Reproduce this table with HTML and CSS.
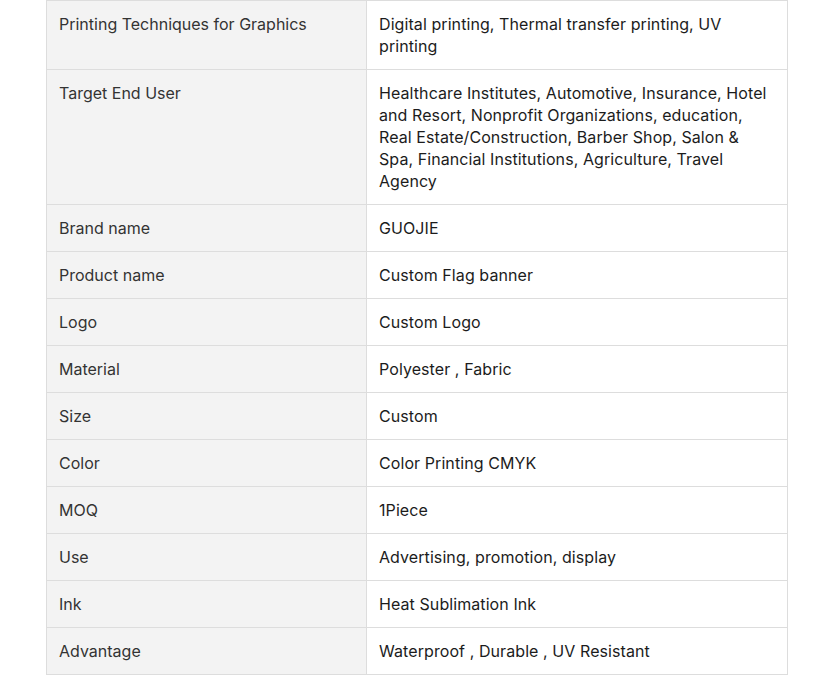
FILE: index.html
```html
<!DOCTYPE html>
<html>
<head>
<meta charset="utf-8">
<link rel="stylesheet" href="styles.css">
</head>
<body>
<table class="spec">
<colgroup><col class="c1"><col class="c2"></colgroup>
<tbody>
<tr><td class="k">Printing Techniques for Graphics</td><td class="v">Digital printing, Thermal transfer printing, UV printing</td></tr>
<tr><td class="k">Target End User</td><td class="v">Healthcare Institutes, Automotive, Insurance, Hotel and Resort, Nonprofit Organizations, education, Real Estate/Construction, Barber Shop, Salon &amp; Spa, Financial Institutions, Agriculture, Travel Agency</td></tr>
<tr><td class="k">Brand name</td><td class="v">GUOJIE</td></tr>
<tr><td class="k">Product name</td><td class="v">Custom Flag banner</td></tr>
<tr><td class="k">Logo</td><td class="v">Custom Logo</td></tr>
<tr><td class="k">Material</td><td class="v">Polyester , Fabric</td></tr>
<tr><td class="k">Size</td><td class="v">Custom</td></tr>
<tr><td class="k">Color</td><td class="v">Color Printing CMYK</td></tr>
<tr><td class="k">MOQ</td><td class="v">1Piece</td></tr>
<tr><td class="k">Use</td><td class="v">Advertising, promotion, display</td></tr>
<tr><td class="k">Ink</td><td class="v">Heat Sublimation Ink</td></tr>
<tr><td class="k">Advantage</td><td class="v">Waterproof , Durable , UV Resistant</td></tr>
</tbody>
</table>
</body>
</html>
```
FILE: styles.css
```css
html, body {
  margin: 0;
  padding: 0;
  background: #fff;
}
body {
  font-family: Inter, "Noto Sans", sans-serif;
  font-size: 16px;
  line-height: 22px;
}
.spec {
  margin-left: 46px;
  width: 741px;
  border-collapse: collapse;
  table-layout: fixed;
}
.c1 { width: 320px; }
.c2 { width: 421px; }
.spec td {
  border: 1px solid #dddddd;
  padding: 12px 17px 12px 12px;
  vertical-align: top;
  text-align: left;
}
.k {
  background: #f3f3f3;
  color: #333333;
}
.v {
  background: #ffffff;
  color: #1c1c1c;
  letter-spacing: 0.08px;
}
```
